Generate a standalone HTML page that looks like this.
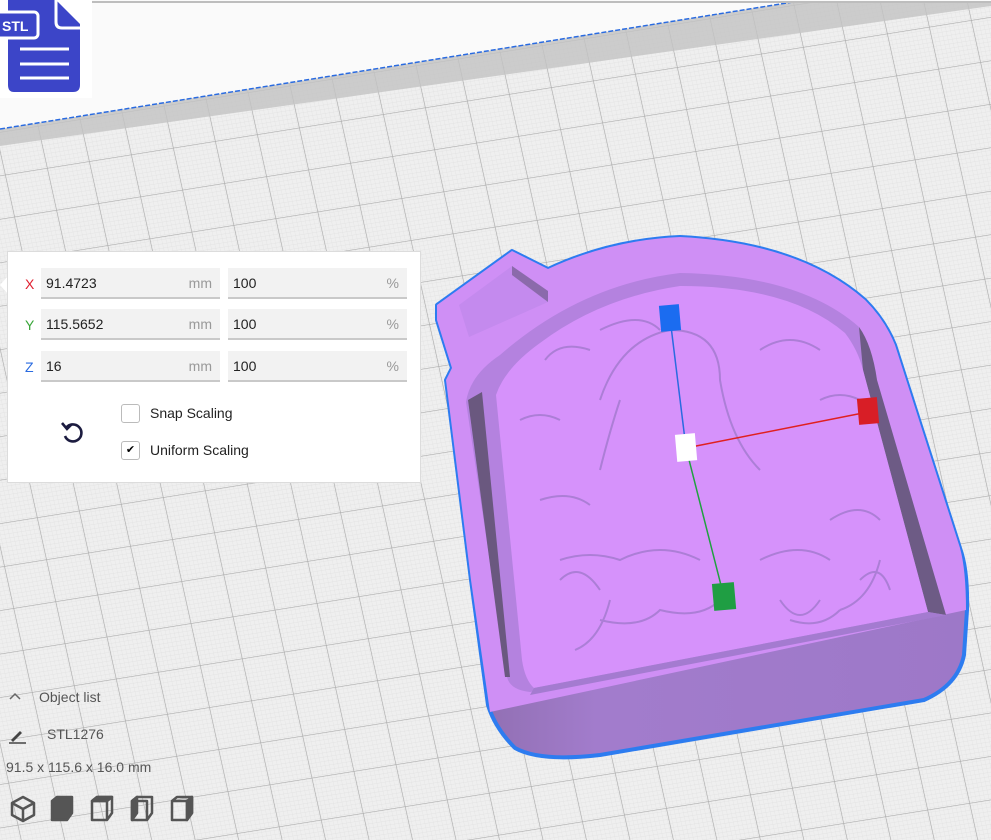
<!DOCTYPE html>
<html><head><meta charset="utf-8"><style>
html,body{margin:0;padding:0;width:991px;height:840px;overflow:hidden;font-family:"Liberation Sans","DejaVu Sans",sans-serif;background:#eeeeee}
#bg{position:absolute;left:0;top:0}
.panel{position:absolute;left:7px;top:251px;width:414px;height:232px;background:#fff;border:1px solid #dcdcdc;box-sizing:border-box}
.lab{position:absolute;left:17px;font-size:14px}
.f{position:absolute;height:31px;background:#f2f2f2;border-bottom:2px solid #c9c9c9;box-sizing:border-box;font-size:14px;color:#222;line-height:30px;padding-left:5px}
.f span{position:absolute;right:8px;color:#999}
.cb{position:absolute;left:113px;width:19px;height:19px;border:1px solid #bbb;border-radius:3px;box-sizing:border-box;background:#fff}
.t{position:absolute;font-size:14px;color:#222}
.gray{color:#555}
</style></head><body>
<svg id="bg" width="991" height="840" xmlns="http://www.w3.org/2000/svg">
<defs>
<pattern id="mi" width="4.2" height="4.2" patternUnits="userSpaceOnUse" patternTransform="matrix(1,-0.16,0.22,1,0,0)">
<path d="M0 0H4.2M0 0V4.2" stroke="#e0e0e0" stroke-width="0.6" fill="none"/></pattern>
<pattern id="ma" width="42" height="42" patternUnits="userSpaceOnUse" patternTransform="matrix(1,-0.16,0.22,1,10,0)">
<path d="M0 0H42M0 0V42" stroke="#a9a9a9" stroke-width="1.3" fill="none"/></pattern>
<linearGradient id="side" x1="0" y1="0" x2="1" y2="0"><stop offset="0" stop-color="#8a6aa8"/><stop offset="0.3" stop-color="#a27ccc"/><stop offset="1" stop-color="#9d78c8"/></linearGradient>
</defs>
<rect width="991" height="840" fill="#efefef"/>
<rect width="991" height="840" fill="url(#mi)"/>
<rect width="991" height="840" fill="url(#ma)"/>
<polygon points="0,129 793,2 991,2 991,6 0,146" fill="#c3c3c3" opacity="0.8"/>
<polygon points="0,129 793,2 991,2 991,0 0,0" fill="#fafafa"/>
<line x1="0" y1="129" x2="793" y2="2" stroke="#2a6be0" stroke-width="1.5" stroke-dasharray="5 2"/>
<line x1="90" y1="2" x2="991" y2="2" stroke="#bdbdbd" stroke-width="2"/>
<rect x="0" y="0" width="92" height="98" fill="#fff"/>
<path d="M8 0 H56 L80 24 V85 Q80 92 73 92 H14 Q8 92 8 85 Z" fill="#3c45c8"/>
<path d="M56 0 V22 Q56 28 62 28 H80" fill="none" stroke="#fff" stroke-width="3"/>
<rect x="-4" y="12" width="42" height="26" rx="4" fill="#3c45c8" stroke="#fff" stroke-width="3"/>
<text x="2" y="31" fill="#fff" font-size="14" font-weight="bold" font-family="Liberation Sans">STL</text>
<g stroke="#fff" stroke-width="3"><line x1="20" y1="49" x2="69" y2="49"/><line x1="20" y1="64" x2="69" y2="64"/><line x1="20" y1="78" x2="69" y2="78"/></g>
<!-- object -->
<path d="M437,305 L512,251 L548,269 Q610,240 680,237 Q800,243 865,300 Q885,320 895,345 L960,548 Q968,570 967,610 L964,655 Q958,685 924,700 L600,755 Q540,762 515,748 Q495,728 488,705 L471,580 L446,380 L452,368 L437,320 Z" fill="url(#side)" stroke="#2d7cf0" stroke-width="4" stroke-linejoin="round"/>
<path d="M437,305 L512,251 L548,269 Q610,240 680,237 Q800,243 865,300 Q885,320 895,345 L960,548 Q966,570 966,610 L490,712 L471,580 L446,380 L452,368 L437,320 Z" fill="#cf8ff5"/>
<path d="M459,305 L512,266 L548,291 L548,302 L469,337 Z" fill="#c48aee"/>
<path d="M512,266 L548,291 L548,302 L512,275 Z" fill="#8b6aab"/>
<path d="M466,402 Q470,375 500,355 Q580,285 680,273 Q800,275 859,327 Q872,345 877,380 L946,615 L530,692 Q510,690 507,677 Z" fill="#b482df"/>
<path d="M468,400 L482,392 L510,677 L505,677 Z" fill="#6a587f"/>
<path d="M859,327 Q872,345 877,380 L946,615 L928,612 L863,370 Z" fill="#6d5b85"/>
<path d="M496,395 Q505,368 540,343 Q600,298 680,286 Q790,286 845,333 Q858,350 863,370 L928,612 L534,688 Q525,680 522,660 Z" fill="#d692fb"/>
<path d="M534,688 L928,612 L946,615 L530,695 Z" fill="#a47bd0"/>
<g fill="none" stroke="#a57bd0" stroke-width="2" opacity="0.85">
<path d="M600,330 Q640,310 660,330"/><path d="M545,360 Q560,340 590,350"/><path d="M520,420 Q540,410 560,420"/>
<path d="M600,400 Q620,340 670,330 Q720,330 720,380 Q730,440 760,470"/><path d="M600,470 Q610,430 620,400"/>
<path d="M540,500 Q570,490 590,505"/><path d="M560,560 Q590,550 620,560 Q660,540 700,560"/>
<path d="M560,580 Q580,560 600,590"/><path d="M600,620 Q640,630 660,610 Q700,620 720,600"/>
<path d="M760,560 Q800,540 830,560"/><path d="M790,620 Q820,630 840,610"/><path d="M830,520 Q860,500 880,520"/>
<path d="M760,350 Q790,330 820,350"/><path d="M820,400 Q840,390 860,400"/><path d="M860,580 Q880,560 890,590"/>
<path d="M575,650 Q600,640 610,600"/><path d="M780,600 Q800,630 820,600"/><path d="M840,610 Q870,600 880,560"/>
</g>
<!-- gizmo -->
<line x1="670" y1="318" x2="686" y2="448" stroke="#2a6be0" stroke-width="1.5"/>
<line x1="686" y1="448" x2="868" y2="412" stroke="#e02020" stroke-width="1.5"/>
<line x1="686" y1="448" x2="724" y2="597" stroke="#20a040" stroke-width="1.5"/>
<rect x="660" y="305" width="20" height="26" fill="#1b6cf0" transform="rotate(-5 670 318)"/>
<rect x="858" y="398" width="20" height="26" fill="#d81e26" transform="rotate(-5 868 411)"/>
<rect x="676" y="434" width="20" height="27" fill="#fff" transform="rotate(-5 686 447)"/>
<rect x="713" y="583" width="22" height="27" fill="#1f9e43" transform="rotate(-5 724 596)"/>
<!-- bottom icons -->
<g fill="none" stroke="#555" stroke-width="2.5" stroke-linejoin="round">
<path d="M23 797 L34 803 V815 L23 821 L12 815 V803 Z M12 803 L23 809 L34 803 M23 809 V821"/>
<path d="M52 801 L57 797 H72 V813 L67 820 H52 Z" fill="#555"/>
<path d="M92 801 L97 797 H112 V813 L107 820 H92 Z M92 801 H107 V820 M107 801 L112 797"/>
<path d="M92 801 L97 797 H112 L107 801 Z" fill="#555"/>
<path d="M132 801 L137 797 H152 V813 L147 820 H132 Z M137 801 H147 V820"/><path d="M132 801 L137 797 V813 L132 820 Z" fill="#555"/>
<path d="M172 801 L177 797 H192 V813 L187 820 H172 Z M172 801 H187 V820"/><path d="M187 801 L192 797 V813 L187 820 Z" fill="#555"/>
</g>
<path d="M10 699 L15 694 L20 699" stroke="#666" stroke-width="1.5" fill="none"/>
<path d="M11 740 L20 731 L22 733 L13 742 Z" fill="#444"/><line x1="9" y1="743" x2="26" y2="743" stroke="#444" stroke-width="1.6"/>
</svg>
<div style="position:absolute;left:0;top:276px;width:0;height:0;border-top:9px solid transparent;border-bottom:9px solid transparent;border-right:8px solid #fff"></div>
<div class="panel">
<div class="lab" style="top:24px;color:#e02030">X</div>
<div class="lab" style="top:65px;color:#3aa63a">Y</div>
<div class="lab" style="top:107px;color:#2a6be0">Z</div>
<div class="f" style="left:33px;top:16px;width:179px">91.4723<span>mm</span></div>
<div class="f" style="left:220px;top:16px;width:179px">100<span>%</span></div>
<div class="f" style="left:33px;top:57px;width:179px">115.5652<span>mm</span></div>
<div class="f" style="left:220px;top:57px;width:179px">100<span>%</span></div>
<div class="f" style="left:33px;top:99px;width:179px">16<span>mm</span></div>
<div class="f" style="left:220px;top:99px;width:179px">100<span>%</span></div>
<div class="cb" style="top:152px"></div>
<div class="cb" style="top:189px;font-size:11px;text-align:center;line-height:17px">✔</div>
<div class="t" style="left:142px;top:153px">Snap Scaling</div>
<div class="t" style="left:142px;top:190px">Uniform Scaling</div>
<svg style="position:absolute;left:52px;top:166px" width="26" height="28"><path d="M6 10 A8.5 8.5 0 1 1 5 18" fill="none" stroke="#1c1c40" stroke-width="2.6"/><path d="M2 5 L7 11 L12 6" fill="none" stroke="#1c1c40" stroke-width="2.6"/></svg>
</div>
<div class="t gray" style="left:39px;top:689px">Object list</div>
<div class="t gray" style="left:47px;top:726px">STL1276</div>
<div class="t gray" style="left:6px;top:759px">91.5 x 115.6 x 16.0 mm</div>
</body></html>
